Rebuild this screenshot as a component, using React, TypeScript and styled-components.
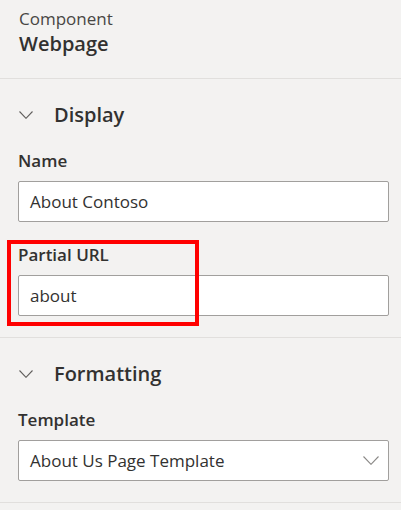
import styled, { createGlobalStyle } from "styled-components";

const GlobalStyle = createGlobalStyle`
  html, body {
    margin: 0;
    padding: 0;
    background: #f3f2f1;
  }
  body {
    font-family: "Open Sans", "Noto Sans", sans-serif;
    color: #323130;
  }
`;

const Panel = styled.div`
  width: 401px;
  height: 510px;
  background: #f3f2f1;
  overflow: hidden;
`;

const Header = styled.div`
  height: 79px;
  box-sizing: border-box;
  padding: 8px 19px 0;
  border-bottom: 1px solid #e1dfdd;
`;

const Kind = styled.div`
  font-size: 17px;
  line-height: 22px;
  color: #484644;
`;

const Title = styled.div`
  font-size: 20px;
  font-weight: 600;
  line-height: 28px;
`;

const Section = styled.section`
  padding: 20px 12px 21px 18px;
  border-bottom: 1px solid #e1dfdd;
`;

const SectionHead = styled.div`
  display: flex;
  align-items: center;
  gap: 21px;
  height: 32px;
  margin-bottom: 18px;
  padding-left: 1px;
`;

const SectionTitle = styled.h2`
  margin: 0;
  font-size: 20px;
  font-weight: 600;
  line-height: 28px;
  color: #323130;
`;

const Field = styled.div`
  position: relative;
  margin-bottom: 21px;
  &:last-child {
    margin-bottom: 0;
  }
`;

const Label = styled.label`
  display: block;
  font-size: 17px;
  font-weight: 600;
  line-height: 24px;
  margin-bottom: 8px;
`;

const Input = styled.div`
  display: flex;
  align-items: center;
  justify-content: space-between;
  height: 41px;
  box-sizing: border-box;
  padding: 0 9px 0 11px;
  background: #ffffff;
  border: 1px solid #a19f9d;
  border-radius: 2px;
  font-size: 17px;
  color: #323130;
`;

const Highlight = styled.div`
  position: absolute;
  left: -11px;
  top: -3px;
  width: 192px;
  height: 86px;
  box-sizing: border-box;
  border: 4px solid #ff0000;
  pointer-events: none;
`;

function Chevron({ w = 14, h = 8, color = "#605e5c" }: { w?: number; h?: number; color?: string }) {
  return (
    <svg width={w} height={h} viewBox={`0 0 ${w} ${h}`} fill="none">
      <path
        d={`M0.5 0.5 L${w / 2} ${h - 0.7} L${w - 0.5} 0.5`}
        stroke={color}
        strokeWidth="1.1"
      />
    </svg>
  );
}

export default function App() {
  return (
    <Panel>
      <GlobalStyle />
      <Header>
        <Kind>Component</Kind>
        <Title>Webpage</Title>
      </Header>

      <Section>
        <SectionHead>
          <Chevron />
          <SectionTitle>Display</SectionTitle>
        </SectionHead>
        <Field>
          <Label>Name</Label>
          <Input>About Contoso</Input>
        </Field>
        <Field>
          <Highlight />
          <Label>Partial URL</Label>
          <Input>about</Input>
        </Field>
      </Section>

      <Section>
        <SectionHead>
          <Chevron />
          <SectionTitle>Formatting</SectionTitle>
        </SectionHead>
        <Field>
          <Label>Template</Label>
          <Input>
            About Us Page Template
            <Chevron w={16} h={9} color="#8a8886" />
          </Input>
        </Field>
      </Section>
    </Panel>
  );
}
